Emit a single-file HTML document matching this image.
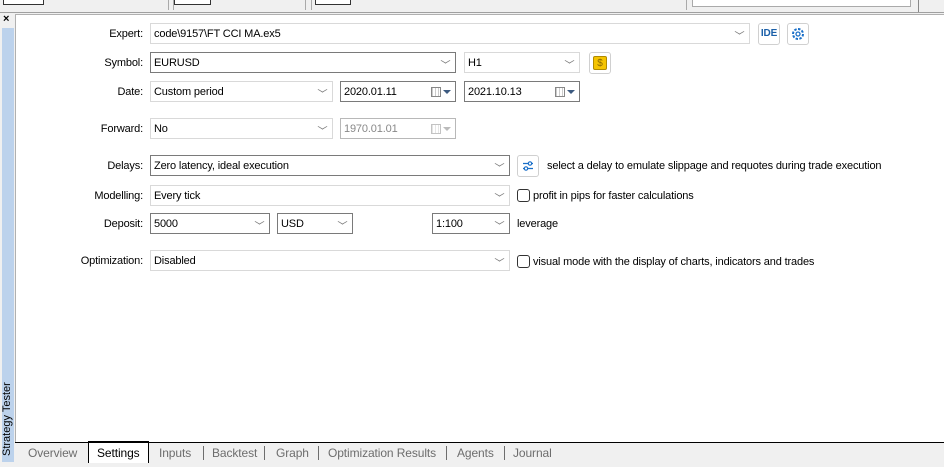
<!DOCTYPE html>
<html><head><style>
*{margin:0;padding:0;box-sizing:border-box}
body{width:944px;height:467px;background:#f0f0f0;position:relative;overflow:hidden;font-family:"Liberation Sans",sans-serif;font-size:11px;letter-spacing:-0.15px;color:#000}
.a{position:absolute}
.lbl{position:absolute;text-align:right;width:140px;left:3px}
.bx{position:absolute;background:#fff;border:1px solid #d9d9d9;height:21px;padding:4px 0 0 3px;white-space:nowrap}
.dk{border-color:#7a7a7a}
.chev{position:absolute;right:6px;top:4px;width:7px;height:7px;border-right:1px solid #777;border-bottom:1px solid #777;transform:scale(1,.6) rotate(45deg)}
.btn{position:absolute;width:22px;height:22px;border:1px solid #d0d0d0;border-radius:3px;background:#fff}
.cb{position:absolute;width:13px;height:13px;border:1px solid #333;border-radius:3px;background:#fff}
.cal{position:absolute;right:14px;top:5px;width:10px;height:10px;border:1px solid #888;background:repeating-linear-gradient(90deg,#ccc 0 1px,#fff 1px 3px)}
.arr{position:absolute;right:4px;top:8px;border-left:4px solid transparent;border-right:4px solid transparent;border-top:4px solid #3c5a80}
.tab{position:absolute;top:446px;color:#6d6d6d;font-size:12px;letter-spacing:-0.1px}
.sep{position:absolute;top:446px;width:1px;height:14px;background:#6d6d6d}
</style></head><body>
<div class="a" style="left:0;top:0;width:944px;height:13px;background:#f0f0f0;border-bottom:1px solid #a0a0a0"></div>
<div class="a" style="left:3px;top:0;width:41px;height:5px;border:1px solid #333;border-top:none;background:#fff"></div>
<div class="a" style="left:168px;top:0;width:1px;height:10px;background:#aaa"></div>
<div class="a" style="left:173px;top:0;width:1px;height:10px;background:#aaa"></div>
<div class="a" style="left:305px;top:0;width:1px;height:10px;background:#aaa"></div>
<div class="a" style="left:311px;top:0;width:1px;height:10px;background:#aaa"></div>
<div class="a" style="left:174px;top:0;width:37px;height:5px;border:1px solid #333;border-top:none;background:#fff"></div>
<div class="a" style="left:315px;top:0;width:36px;height:5px;border:1px solid #333;border-top:none;background:#fff"></div>
<div class="a" style="left:686px;top:0;width:1px;height:10px;background:#aaa"></div>
<div class="a" style="left:692px;top:0;width:219px;height:7px;border:1px solid #aaa;border-top:none;background:#fff"></div>
<div class="a" style="left:918px;top:0;width:1px;height:12px;background:#888"></div>
<div class="a" style="left:3px;top:13px;font-size:11px;font-weight:bold">×</div>
<div class="a" style="left:2px;top:28px;width:12px;height:434px;background:#bcd2ec"></div>
<div class="a" style="left:1px;top:456px;transform-origin:0 0;transform:rotate(-90deg);font-size:11px;letter-spacing:0;white-space:nowrap;color:#000">Strategy Tester</div>
<div class="a" style="left:15px;top:14px;width:929px;height:428px;background:#fff;border-left:1px solid #b0b0b0;border-top:1px solid #b0b0b0"></div>

<div class="lbl" style="top:28px">Expert:</div>
<div class="bx" style="left:150px;top:23px;width:600px">code\9157\FT CCI MA.ex5<span class="chev"></span></div>
<div class="btn" style="left:758px;top:23px;color:#1a5fa8;font-size:10px;font-weight:bold;text-align:center;line-height:20px">IDE</div>
<div class="btn" style="left:787px;top:23px"><svg width="20" height="20" viewBox="0 0 20 20"><circle cx="10" cy="10" r="5" fill="none" stroke="#1a6fc8" stroke-width="2" stroke-dasharray="2.5 1.4"/><circle cx="10" cy="10" r="2" fill="none" stroke="#1a6fc8" stroke-width="1.3"/></svg></div>

<div class="lbl" style="top:57px">Symbol:</div>
<div class="bx dk" style="left:150px;top:52px;width:306px">EURUSD<span class="chev"></span></div>
<div class="bx" style="left:464px;top:52px;width:116px">H1<span class="chev"></span></div>
<div class="btn" style="left:589px;top:52px"><div class="a" style="left:3px;top:3px;width:14px;height:14px;background:#f5c400;border:1px solid #b08a00;border-radius:2px;color:#8a6a00;font-size:10px;text-align:center;line-height:13px">$</div></div>

<div class="lbl" style="top:86px">Date:</div>
<div class="bx" style="left:150px;top:81px;width:183px">Custom period<span class="chev"></span></div>
<div class="bx dk" style="left:340px;top:81px;width:116px">2020.01.11<span class="cal"></span><span class="arr"></span></div>
<div class="bx dk" style="left:464px;top:81px;width:116px">2021.10.13<span class="cal"></span><span class="arr"></span></div>

<div class="lbl" style="top:123px">Forward:</div>
<div class="bx" style="left:150px;top:118px;width:183px">No<span class="chev"></span></div>
<div class="bx" style="left:340px;top:118px;width:116px;border-color:#b8b8b8;color:#888">1970.01.01<span class="cal" style="opacity:.5"></span><span class="arr" style="border-top-color:#bbb"></span></div>

<div class="lbl" style="top:160px">Delays:</div>
<div class="bx dk" style="left:150px;top:155px;width:360px">Zero latency, ideal execution<span class="chev"></span></div>
<div class="btn" style="left:517px;top:155px"><svg width="20" height="20" viewBox="0 0 20 20" fill="none" stroke="#1a6fc8" stroke-width="1.2"><path d="M5 7.5h10M5 12.5h10"/><circle cx="12" cy="7.5" r="1.7" fill="#fff"/><circle cx="8" cy="12.5" r="1.7" fill="#fff"/></svg></div>
<div class="a" style="left:547px;top:160px">select a delay to emulate slippage and requotes during trade execution</div>

<div class="lbl" style="top:190px">Modelling:</div>
<div class="bx" style="left:150px;top:185px;width:360px">Every tick<span class="chev"></span></div>
<div class="cb" style="left:517px;top:189px"></div>
<div class="a" style="left:533px;top:190px">profit in pips for faster calculations</div>

<div class="lbl" style="top:218px">Deposit:</div>
<div class="bx dk" style="left:150px;top:213px;width:120px">5000<span class="chev"></span></div>
<div class="bx dk" style="left:277px;top:213px;width:76px">USD<span class="chev"></span></div>
<div class="bx dk" style="left:432px;top:213px;width:78px">1:100<span class="chev"></span></div>
<div class="a" style="left:517px;top:218px">leverage</div>

<div class="lbl" style="top:255px">Optimization:</div>
<div class="bx" style="left:150px;top:250px;width:360px">Disabled<span class="chev"></span></div>
<div class="cb" style="left:517px;top:255px"></div>
<div class="a" style="left:533px;top:256px">visual mode with the display of charts, indicators and trades</div>

<div class="a" style="left:15px;top:442px;width:929px;height:1px;background:#000"></div>
<div class="a" style="left:88px;top:441px;width:61px;height:22px;background:#fff;border:1px solid #000;border-top:2px solid #000;border-bottom:none"></div>
<div class="tab" style="left:28px">Overview</div>
<div class="tab" style="left:97px;color:#000">Settings</div>
<div class="tab" style="left:159px">Inputs</div>
<div class="sep" style="left:203px"></div>
<div class="tab" style="left:212px">Backtest</div>
<div class="sep" style="left:264px"></div>
<div class="tab" style="left:276px">Graph</div>
<div class="sep" style="left:318px"></div>
<div class="tab" style="left:328px">Optimization Results</div>
<div class="sep" style="left:446px"></div>
<div class="tab" style="left:457px">Agents</div>
<div class="sep" style="left:504px"></div>
<div class="tab" style="left:513px">Journal</div>
</body></html>
